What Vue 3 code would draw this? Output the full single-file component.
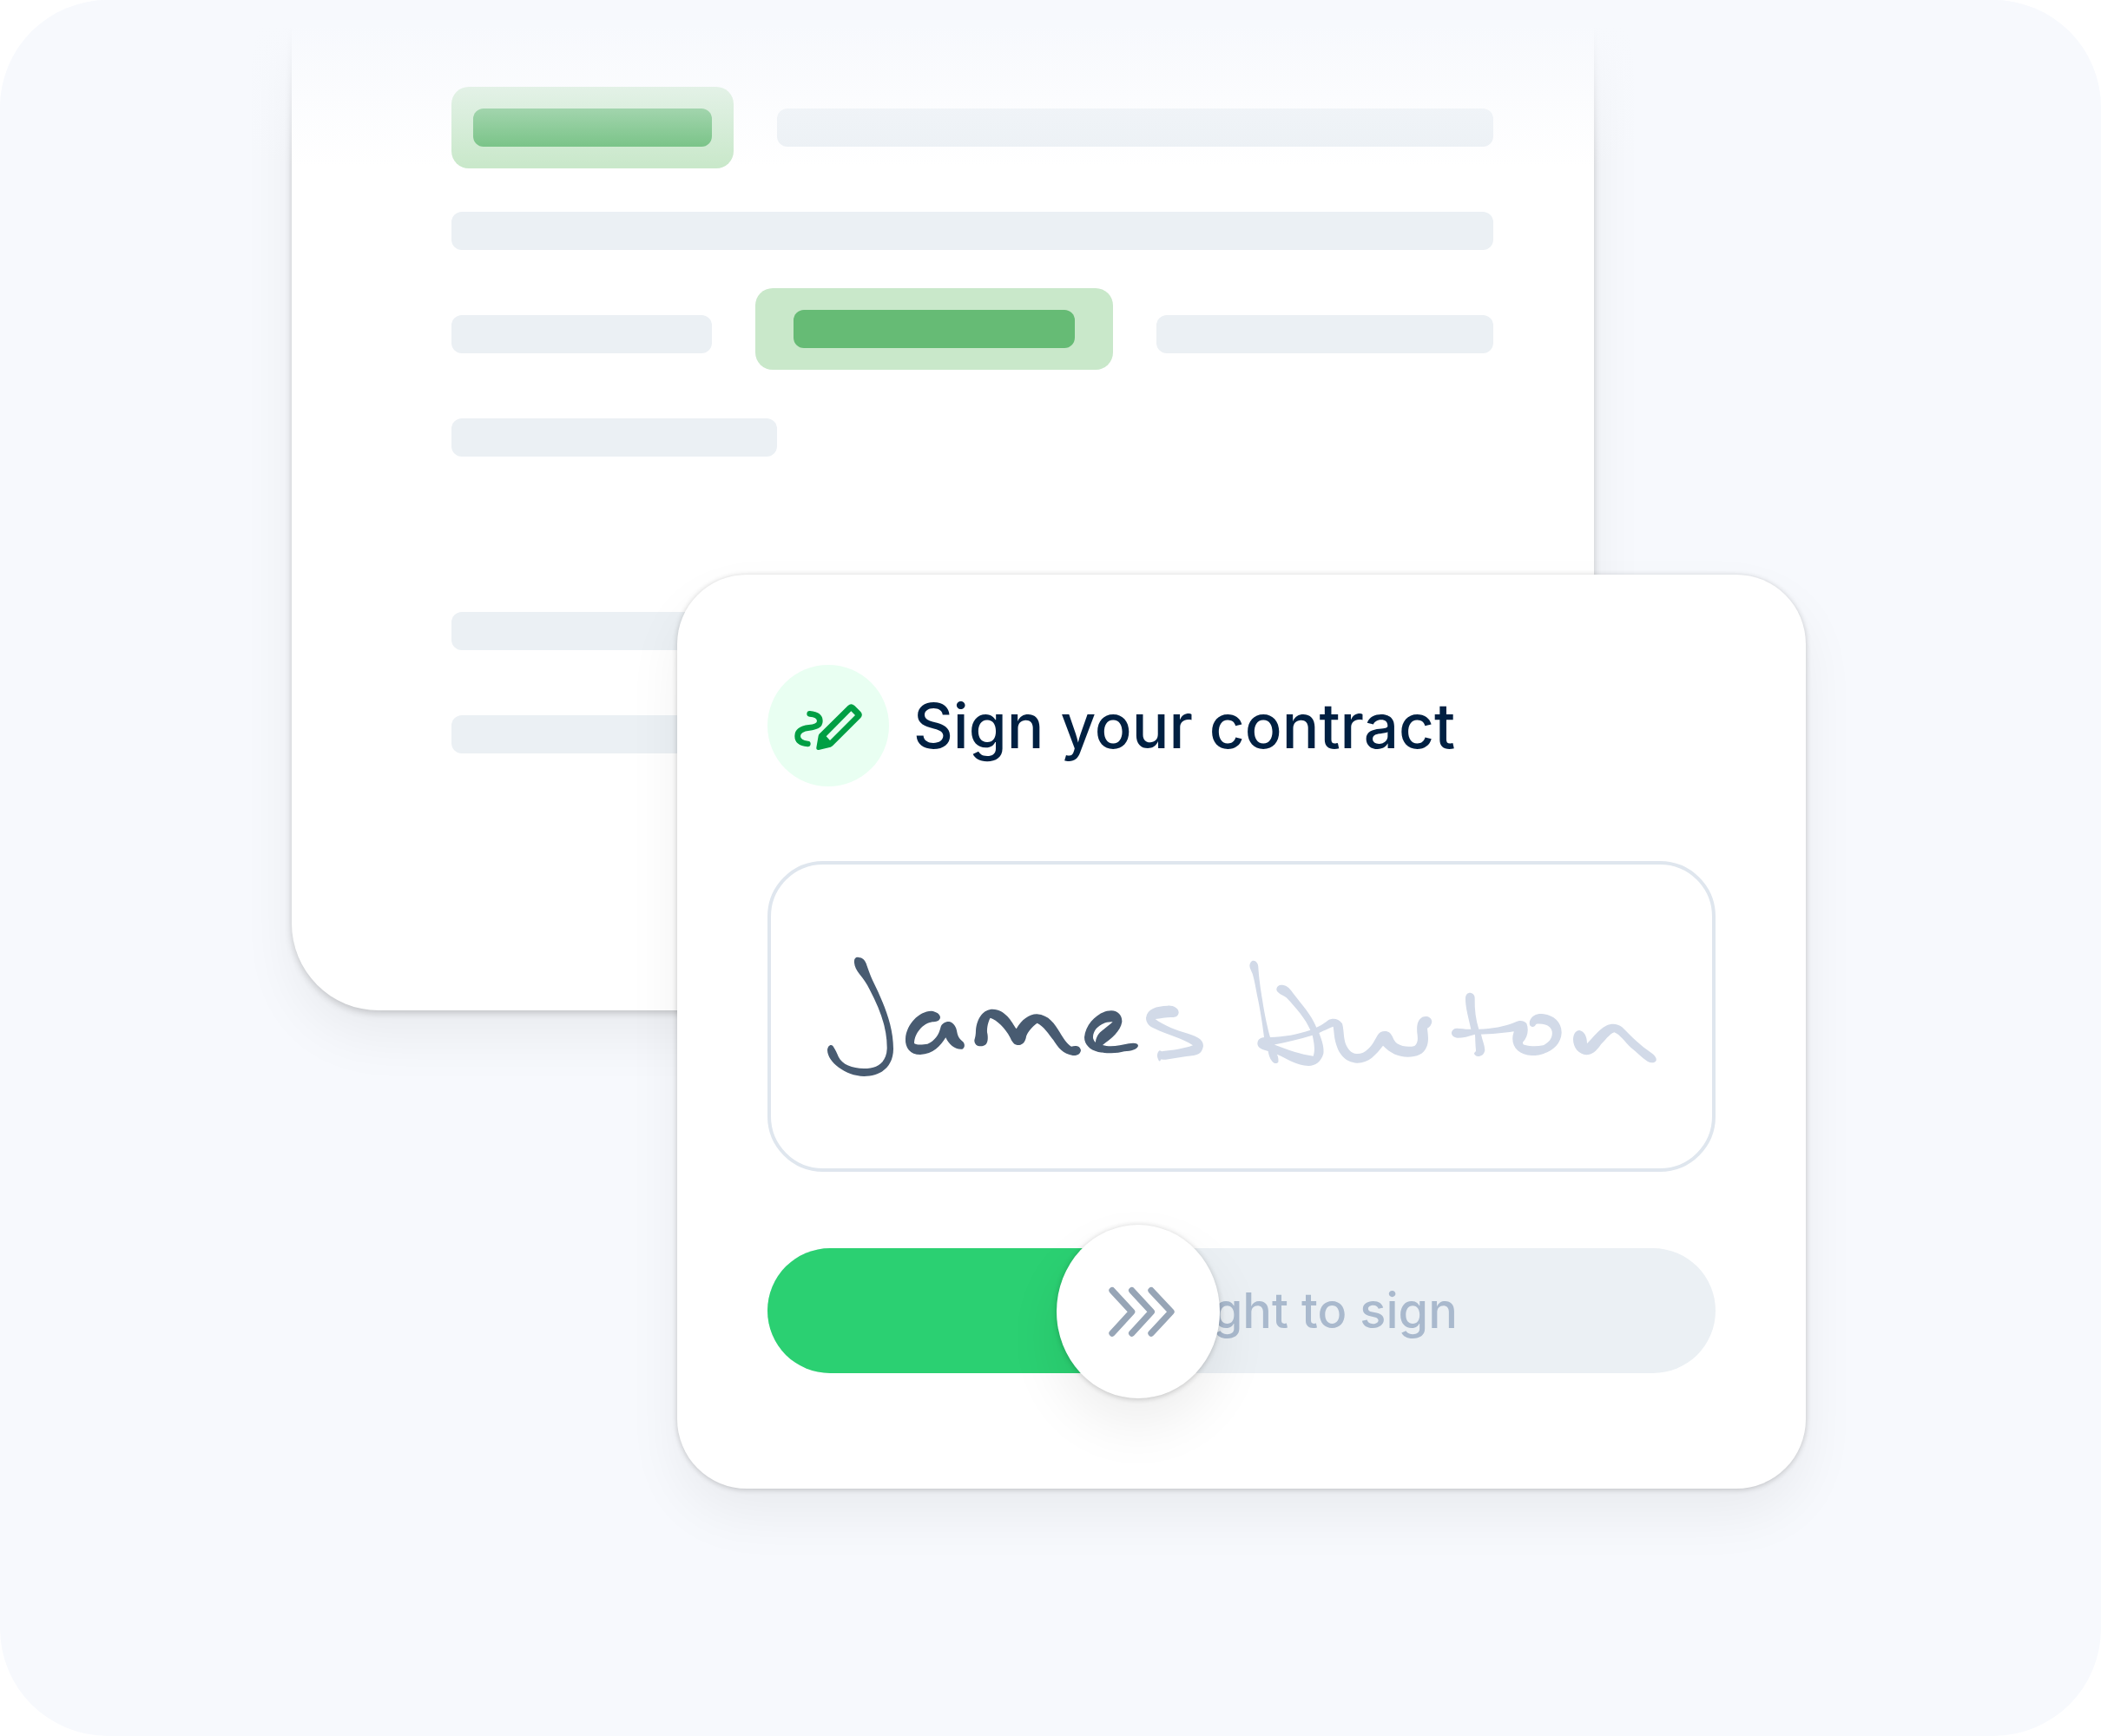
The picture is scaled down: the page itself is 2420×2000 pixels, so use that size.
<script setup>
import { ref, computed } from 'vue'

const progress = ref(36.8)
const progressStyle = computed(() => ({ '--progress': progress.value / 100 }))
</script>

<template>
  <main class="stage">
    <section class="document" aria-label="Contract document">
      <div class="row row-opening">
        <div class="chip"><span class="bar bar-green"></span></div>
        <span class="bar"></span>
      </div>
      <div class="row">
        <span class="bar"></span>
      </div>
      <div class="row row-inline-chip">
        <span class="bar"></span>
        <div class="chip chip-raised"><span class="bar bar-green"></span></div>
        <span class="bar"></span>
      </div>
      <div class="row row-closing">
        <span class="bar"></span>
      </div>
      <div class="row row-paragraph">
        <span class="bar"></span>
      </div>
      <div class="row">
        <span class="bar"></span>
      </div>
    </section>

    <section class="card" aria-labelledby="sign-title">
      <header class="card-header">
        <svg class="badge" viewBox="11 17 420 420" aria-hidden="true">
          <circle cx="221" cy="227" r="210" fill="#e9fff2" />
          <path
            d="M157 186C181 188 192 198 192 211C192 226 178 231 155 234C129 237 115 245 115 263C115 280 128 288 150 290"
            fill="none" stroke="#009f44" stroke-width="20" stroke-linecap="round"
          />
          <path
            fill="#009f44" fill-rule="evenodd"
            d="M180 303L187 262Q188 258 191 255L289 158Q300 148 312 158L333 179Q342 189 333 200L236 297Q233 300 229 301L188 311Q179 312 180 303ZM214 264L300 177L314 191L227 278Z"
          />
        </svg>
        <h1 id="sign-title" class="title">Sign your contract</h1>
      </header>

      <div class="signature">
        <svg class="ink" viewBox="-126 -252 3252 1050" role="img" aria-label="Handwritten signature of James Burton">
          <g fill="#485b71">
            <path d="M162 88C160 72 168 67 177 69C190 69 198 78 203 90C210 110 215 125 225 148C260 220 297 300 297 385C297 450 250 480 196 480C130 478 70 430 69 390C70 375 80 368 88 375C97 388 102 400 107 412C120 440 155 453 195 453C245 453 273 430 275 385C276 320 255 255 215 180C205 160 193 142 180 127C170 115 163 100 162 88Z" />
            <path d="M428 254C445 256 460 265 459 277C457 290 445 292 432 292C400 297 370 330 369 366C380 373 400 370 415 368C440 358 455 335 460 312C464 296 478 290 490 291C505 294 515 310 517 327C520 345 528 352 537 360C545 368 545 382 535 386C510 388 490 372 478 346C460 375 435 403 390 405C355 405 337 380 339 350C342 300 385 255 428 254Z" />
            <path d="M577 355C580 345 582 335 582 322C586 275 610 248 640 248C685 250 705 290 722 316C740 285 765 265 793 265C835 268 855 300 872 328C885 350 898 370 912 377C925 373 942 373 945 390C943 405 930 409 917 408C885 404 865 380 850 355C835 335 815 305 794 296C775 310 757 330 755 348C750 368 738 373 725 372C712 370 706 358 700 345C685 315 655 285 632 278C625 290 620 310 621 328C625 345 624 360 618 368C608 378 592 378 583 371C578 366 577 361 577 355Z" />
            <path fill-rule="evenodd" d="M1050 253C1075 254 1088 270 1087 292C1082 325 1050 350 1020 372C1045 380 1080 374 1110 367C1130 363 1143 366 1143 375C1138 388 1120 392 1095 394C1070 402 1030 400 1005 396C975 388 957 370 957 345C962 295 1010 253 1050 253ZM1055 292C1020 290 985 315 987 348C989 355 992 360 996 363C996 350 1003 335 1015 325C1030 312 1045 302 1055 292Z" />
          </g>
          <g fill="#d2dae8">
            <path d="M1245 236C1262 234 1284 245 1283 260C1281 273 1270 277 1255 276C1238 276 1220 280 1202 282C1225 300 1260 315 1300 328C1340 340 1368 350 1368 375C1364 400 1350 405 1335 408C1300 412 1270 417 1238 422C1230 423 1225 420 1221 422C1219 430 1214 428 1213 423C1206 410 1209 396 1217 391C1222 391 1222 395 1228 393C1262 390 1300 385 1332 373C1300 350 1240 335 1200 315C1182 308 1170 295 1170 278C1175 245 1205 238 1245 236Z" />
            <g transform="translate(1470)">
              <path d="M58 97C60 85 66 80 71 80C80 80 88 90 88 102C90 140 97 185 102 215C110 270 122 320 129 345L153 404C158 415 158 425 157 431C152 437 142 436 136 428C127 418 124 405 122 393L108 345C103 300 92 235 84 200C78 165 73 142 68 125C62 112 58 105 58 97Z" />
              <path d="M109 345L129 345C175 344 225 335 268 320L289 311C305 304 318 295 330 286C345 278 365 280 378 298C386 325 380 360 398 383C410 402 430 406 450 398C475 385 488 360 500 338C510 322 528 322 540 328C555 340 552 355 568 367C585 378 610 380 628 375C642 365 639 345 637 330C635 305 638 285 655 275C670 270 686 275 688 291C686 304 680 310 672 314C674 335 678 355 671 375C660 405 635 413 605 413C570 412 545 400 519 374C495 405 470 434 430 434C385 430 365 400 355 362C350 345 350 325 347 308C325 316 310 325 298 330L275 338C230 352 185 362 147 370L109 380Z" />
              <path d="M151 178C153 166 163 162 175 165C190 168 200 180 210 195C240 235 270 265 289 311C291 320 295 325 298 330C310 360 316 385 313 402C305 430 285 444 262 444C220 442 190 420 153 404L122 393C100 388 86 382 85 367C86 350 98 346 109 345L147 372C190 388 235 405 278 410C286 390 280 360 275 338L268 320C250 280 220 245 185 208C165 196 150 190 151 178Z" />
              <path d="M804 210C804 197 812 191 820 191C830 192 837 200 836 212C835 250 840 285 850 317L858 335C862 355 870 370 871 390C868 405 858 411 848 411C840 411 834 406 834 400C836 396 841 394 840 390C838 370 838 350 837 335L823 317C815 280 803 240 804 210Z" />
              <path d="M774 314C790 314 805 318 823 317L850 317C895 315 940 308 975 293C990 285 1005 286 1015 297C1024 320 1018 345 1002 362C1002 368 1004 371 1008 371C1030 377 1050 377 1072 373C1095 362 1106 345 1103 325C1098 303 1075 297 1049 299C1045 303 1043 309 1034 309C1025 306 1024 298 1026 289C1033 270 1050 263 1068 264C1105 266 1137 290 1136 330C1134 378 1085 408 1033 408C990 407 964 380 967 345C967 338 971 330 971 325C930 331 890 336 837 335C815 342 795 347 777 347C762 345 755 338 756 328C758 319 765 314 774 314Z" />
              <path d="M1176 352C1177 332 1185 322 1198 321C1215 325 1224 342 1224 367C1245 345 1265 318 1290 305C1310 295 1330 298 1345 310C1380 345 1410 375 1445 398C1460 408 1465 418 1463 425C1458 434 1446 435 1434 429C1412 415 1395 395 1375 380C1355 362 1338 335 1318 328C1300 335 1285 358 1272 370C1257 393 1240 406 1222 406C1195 405 1176 380 1176 352Z" />
            </g>
          </g>
        </svg>
      </div>

      <div class="slider" :style="progressStyle">
        <label class="slider-label" for="swipe">Swipe right to sign</label>
        <span class="slider-fill"></span>
        <input id="swipe" v-model.number="progress" class="slider-input" type="range" min="0" max="100" step="0.1" />
        <svg class="chevrons" viewBox="48 47 564 600" aria-hidden="true">
          <path
            d="M240 274L308 348L240 422M308 274L376 348L308 422M375 274L444 348L375 422"
            fill="none" stroke="#97a5b6" stroke-width="22" stroke-linecap="round" stroke-linejoin="round"
          />
        </svg>
      </div>
    </section>
  </main>
</template>

<style>
body {
  margin: 0;
  background: #fff;
}
</style>

<style scoped>
.stage {
  position: relative;
  display: grid;
  grid-template-columns: 336fr 444fr 1056fr 244fr 340fr;
  align-items: start;
  box-sizing: border-box;
  min-height: 100vh;
  overflow: hidden;
  border-radius: 124px;
  background: #f7f9fd;
  font-family: Inter, "Liberation Sans", sans-serif;
}

/* The page fades into the backdrop at the top. */
.stage::after {
  content: "";
  position: absolute;
  inset: 0 0 auto;
  height: 192px;
  background: linear-gradient(#f7f9fd 30px, #f7f9fd00);
}

.document {
  grid-area: 1 / 2 / 2 / 4;
  display: flex;
  flex-direction: column;
  gap: 25px;
  padding: 100px 116px 271px 184px;
  border-radius: 0 0 100px 100px;
  background: #fff;
  box-shadow: 0 3px 8px rgba(0, 0, 0, 0.18), 0 30px 64px rgba(0, 0, 0, 0.06);
}

.row {
  display: grid;
  grid-template-rows: 94px;
  align-items: center;
  gap: 50px;
}

.row-opening {
  grid-template-columns: 325fr 825fr;
}

.row-inline-chip {
  grid-template-columns: 300fr 412fr 388fr;
}

.row-closing {
  grid-template-columns: 31.25%;
}

.row-paragraph {
  margin-top: 104px;
}

.bar {
  height: 44px;
  border-radius: 12px;
  background: #ebf0f4;
}

.bar-green {
  background: #66bb75;
}

.chip {
  display: grid;
  padding: 25px;
  border-radius: 20px;
  background: #c9e8ca;
}

.chip-raised {
  padding: 25px 44px;
  margin-bottom: 12px;
}

.card {
  grid-area: 1 / 3 / 2 / 5;
  display: flex;
  flex-direction: column;
  margin-top: 662px;
  padding: 104px 104px 133px;
  border-radius: 80px;
  background: #fff;
  box-shadow: 0 1px 6px rgba(0, 0, 0, 0.2), 0 30px 64px rgba(0, 0, 0, 0.06);
}

.card-header {
  display: flex;
  align-items: center;
  gap: 28px;
}

.badge {
  flex: none;
  width: 140px;
  height: 140px;
}

.title {
  margin: 0;
  color: #002042;
  font-size: 71px;
  font-weight: 500;
  line-height: 88px;
}

.signature {
  margin-top: 86px;
  border: 4px solid #dfe6ee;
  border-radius: 64px;
}

.ink {
  display: block;
  width: 100%;
  height: auto;
}

.slider {
  --knob-left: calc((100% - 188px) * var(--progress));
  position: relative;
  display: flex;
  align-items: center;
  justify-content: center;
  height: 144px;
  margin-top: 88px;
  border-radius: 72px;
  background: #ebf0f4;
}

.slider-label {
  color: #a9b9cd;
  font-size: 56px;
  font-weight: 500;
  line-height: 72px;
  white-space: nowrap;
}

.slider-fill {
  position: absolute;
  inset: 0 auto 0 0;
  width: calc(var(--knob-left) + 94px);
  border-radius: 72px 0 0 72px;
  background: #2bd072;
}

.slider-input {
  position: absolute;
  inset: -28px 0;
  width: 100%;
  height: 202px;
  margin: 0;
  appearance: none;
  background: transparent;
  cursor: pointer;
}

.slider-input::-webkit-slider-thumb {
  appearance: none;
  width: 188px;
  height: 200px;
  border: 0;
  border-radius: 50%;
  background: #fff;
  box-shadow: 0 1px 6px rgba(0, 0, 0, 0.2), 0 30px 64px rgba(0, 0, 0, 0.07);
}

.slider-input::-moz-range-thumb {
  width: 188px;
  height: 200px;
  border: 0;
  border-radius: 50%;
  background: #fff;
  box-shadow: 0 1px 6px rgba(0, 0, 0, 0.2), 0 30px 64px rgba(0, 0, 0, 0.07);
}

.chevrons {
  position: absolute;
  top: -27px;
  left: var(--knob-left);
  width: 188px;
  height: 200px;
  pointer-events: none;
}
</style>
